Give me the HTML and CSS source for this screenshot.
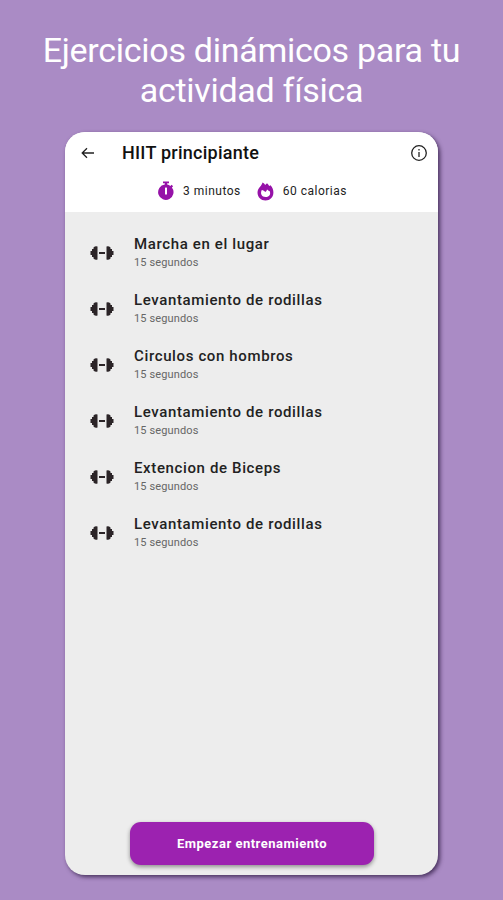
FILE: index.html
```html
<!DOCTYPE html>
<html lang="es">
<head>
    <meta charset="UTF-8">
    <meta name="viewport" content="width=device-width, initial-scale=1.0">
    <title>HIIT principiante</title>
    <link rel="stylesheet" href="styles.css">
</head>
<body>
    <svg width="0" height="0" class="sprite">
        <symbol id="dumbbell" viewBox="0 0 24 16">
            <path d="M0.500 6h1.500v-2h1.500v-1.500q2-2 4-1v13q-2 1-4-1v-1.500h-1.500v-2h-1.500z"/>
            <path d="M23.500 6h-1.500v-2h-1.500v-1.500q-2-2-4-1v13q2 1 4-1v-1.500h1.500v-2h1.500z"/>
            <rect x="9" y="7" width="6" height="2"/>
        </symbol>
    </svg>

    <h1>Ejercicios dinámicos para tu<br>actividad física</h1>

    <div class="phone">
        <div class="header">
            <div class="topbar">
                <svg class="back" width="14" height="12" viewBox="0 0 14 12">
                    <path d="M13 6H1.500M6 1.200L1.200 6L6 10.800"/>
                </svg>
                <h2>HIIT principiante</h2>
                <svg class="info" width="18" height="18" viewBox="0 0 18 18">
                    <circle cx="9" cy="9" r="7.300"/>
                    <path d="M9 8v5M9 5v1.500"/>
                </svg>
            </div>
            <div class="stats">
                <div class="stat">
                    <svg width="16" height="20" viewBox="0 0 16 20">
                        <path d="M5 0.500h6v1.800H9.200v1.300a8 8 0 0 1 3.200 1.300l1.200-1.200 1.500 1.500-1.200 1.300A7.700 7.700 0 1 1 6.800 3.600V2.300H5z"/>
                        <rect class="cut" x="7" y="6.500" width="2" height="7" rx="0.500"/>
                    </svg>
                    <span>3 minutos</span>
                </div>
                <div class="stat calories">
                    <svg width="17" height="19" viewBox="0 0 17 19">
                        <path d="M5.500 0.500C6.800 1 7.500 1.800 8.200 3L10 1.200C11 2 11.500 3 12.200 4L13.600 3.200C15.500 5.500 16.500 8 16.400 10.800C16.200 15.500 13 18.500 8.500 18.500S.6 15.300.5 10.800C.5 8 1.500 6.500 2.800 5C4.200 3.400 5 2.400 5.500.5z"/>
                        <path class="cut" d="M4.800 8C6.300 8.200 7.400 9 8.200 10C9.200 9.500 9.800 8.700 10 7.600C11 8 11.500 8.600 12 9.300L12.700 9C14 12.500 12.400 15 8.700 15C4.500 15 3 11.500 4.800 8z"/>
                    </svg>
                    <span>60 calorias</span>
                </div>
            </div>
        </div>

        <ul class="exercises">
            <li>
                <svg class="dumbbell"><use href="#dumbbell"/></svg>
                <div><h3>Marcha en el lugar</h3><p>15 segundos</p></div>
            </li>
            <li>
                <svg class="dumbbell"><use href="#dumbbell"/></svg>
                <div><h3>Levantamiento de rodillas</h3><p>15 segundos</p></div>
            </li>
            <li>
                <svg class="dumbbell"><use href="#dumbbell"/></svg>
                <div><h3>Circulos con hombros</h3><p>15 segundos</p></div>
            </li>
            <li>
                <svg class="dumbbell"><use href="#dumbbell"/></svg>
                <div><h3>Levantamiento de rodillas</h3><p>15 segundos</p></div>
            </li>
            <li>
                <svg class="dumbbell"><use href="#dumbbell"/></svg>
                <div><h3>Extencion de Biceps</h3><p>15 segundos</p></div>
            </li>
            <li>
                <svg class="dumbbell"><use href="#dumbbell"/></svg>
                <div><h3>Levantamiento de rodillas</h3><p>15 segundos</p></div>
            </li>
        </ul>

        <button>Empezar entrenamiento</button>
    </div>
</body>
</html>
```
FILE: styles.css
```css
* {
    box-sizing: border-box;
    margin: 0;
    padding: 0;
}
body {
    font-family: Roboto, sans-serif;
    background-color: #aa8bc5;
    height: 900px;
    overflow: hidden;
}
.sprite {
    display: block;
}
h1 {
    padding-top: 30px;
    color: white;
    font-size: 34px;
    font-weight: 400;
    line-height: 40px;
    letter-spacing: -0.28px;
    text-align: center;
    white-space: nowrap;
}
.phone {
    display: flex;
    flex-direction: column;
    width: 373px;
    height: 743px;
    margin: 22px 0 0 65px;
    background-color: #ededed;
    border-radius: 20px;
    box-shadow: 2px 2px 4px rgba(40, 20, 60, 0.75);
    overflow: hidden;
}
.header {
    height: 80px;
    background-color: white;
}
.topbar {
    display: flex;
    align-items: center;
    height: 42px;
    padding: 0 10px 0 16px;
}
.back, .info {
    fill: none;
    stroke: #222;
    stroke-width: 1.3;
}
h2 {
    flex: 1;
    margin-left: 27px;
    padding-bottom: 2px;
    font-size: 18px;
    font-weight: 500;
    letter-spacing: 0.25px;
    color: #111;
}
.stats {
    display: flex;
    align-items: center;
    height: 34px;
    padding-left: 93px;
}
.stat {
    display: flex;
    align-items: center;
    gap: 9px;
    font-size: 12px;
    letter-spacing: 0.5px;
    color: #222;
}
.stat svg {
    fill: #9612a8;
}
.stat .cut {
    fill: white;
}
.calories {
    margin-left: 16px;
}
.exercises {
    flex: 1;
    padding-top: 13px;
    list-style: none;
}
.exercises li {
    display: flex;
    align-items: center;
    height: 56px;
    padding-left: 25px;
}
.dumbbell {
    width: 24px;
    height: 16px;
    margin-right: 20px;
    fill: #2b2427;
}
h3 {
    font-size: 15px;
    font-weight: 500;
    line-height: 20px;
    letter-spacing: 0.63px;
    color: #222;
}
.exercises p {
    font-size: 11px;
    line-height: 18px;
    letter-spacing: 0.13px;
    color: #666;
}
button {
    width: 244px;
    height: 43px;
    margin: 0 0 10px 65px;
    background-color: #9c22b0;
    border: none;
    border-radius: 11px;
    box-shadow: 0 2px 4px rgba(0, 0, 0, 0.4);
    color: white;
    font-family: inherit;
    font-size: 13px;
    font-weight: 700;
    letter-spacing: 0.5px;
}
```
